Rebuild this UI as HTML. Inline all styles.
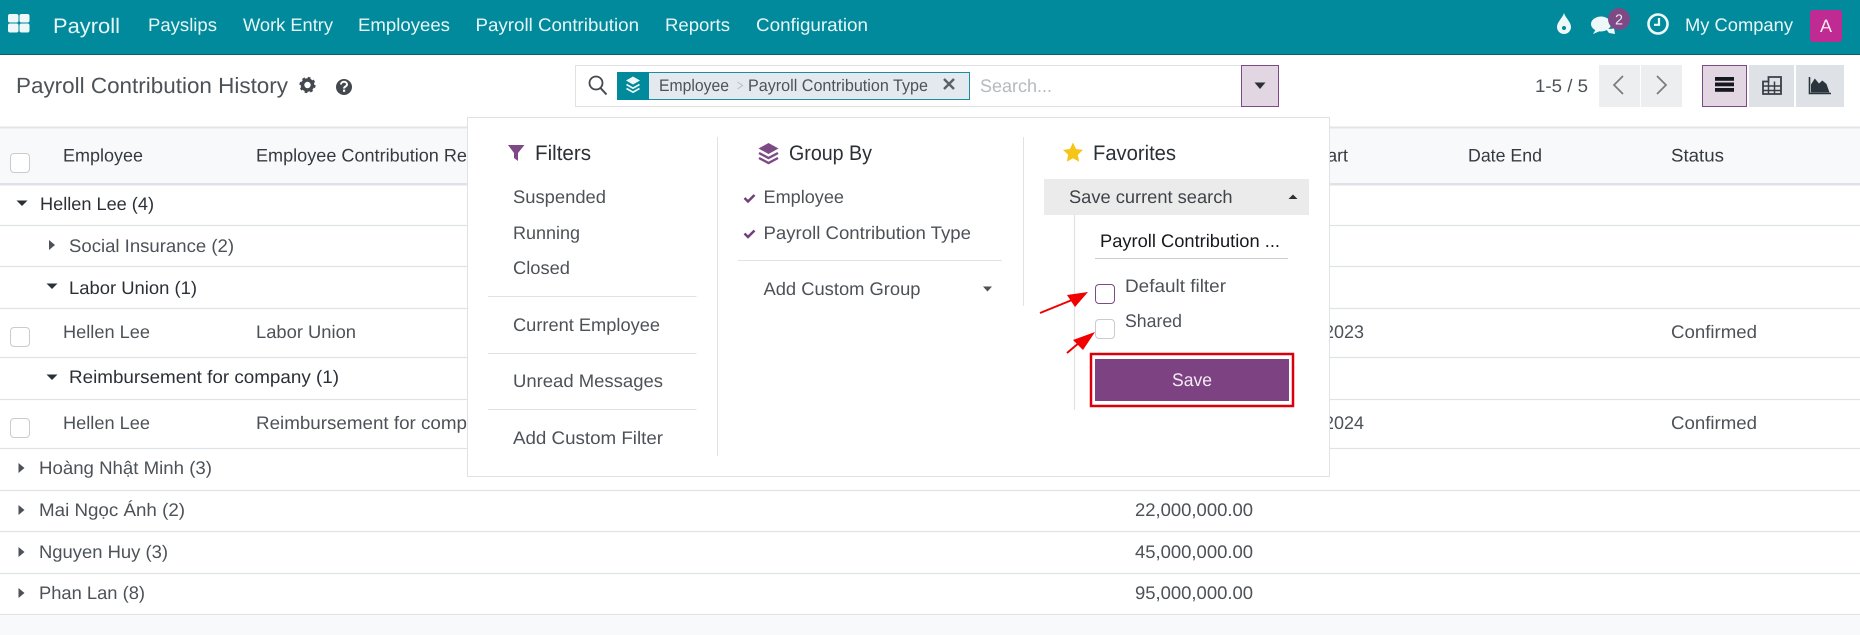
<!DOCTYPE html>
<html lang="en">
<head>
<meta charset="utf-8">
<title>Payroll Contribution History</title>
<style>
html,body{margin:0;padding:0;width:1860px;height:635px;overflow:hidden;background:#fff}
svg{display:block}
text{font-family:"Liberation Sans","Noto Sans CJK SC",sans-serif;font-size:18.2px;fill:#4d5258;text-rendering:geometricPrecision}
.n{fill:#e9f6f8}
.d{fill:#2b3036}
.h{fill:#353a40}
.t{font-size:21px;fill:#2b3036}
.l{stroke:#e0e3e6;stroke-width:1.2}
.cb{fill:#fff;stroke:#c9cbce;stroke-width:1}
.tri{fill:#2b3036}
.tr2{fill:#4d5258}
</style>
</head>
<body>
<svg width="1860" height="635" viewBox="0 0 1860 635" xmlns="http://www.w3.org/2000/svg">
<rect width="1860" height="635" fill="#fff"/>

<!-- navbar -->
<rect width="1860" height="54" fill="#018a9b"/>
<rect y="54" width="1860" height="1" fill="#05606b"/>
<g fill="#eef8f9">
<rect x="8" y="14" width="10.500" height="8.500" rx="2"/><rect x="19.500" y="14" width="10" height="8.500" rx="2"/>
<rect x="8" y="23.500" width="10.500" height="9" rx="2"/><rect x="19.500" y="23.500" width="10" height="9" rx="2"/>
</g>
<text class="n" x="53" y="33" style="font-size:21px" textLength="67" lengthAdjust="spacingAndGlyphs">Payroll</text>
<text class="n" x="148" y="31" textLength="69" lengthAdjust="spacingAndGlyphs">Payslips</text>
<text class="n" x="243" y="31" textLength="90" lengthAdjust="spacingAndGlyphs">Work Entry</text>
<text class="n" x="358" y="31" textLength="92" lengthAdjust="spacingAndGlyphs">Employees</text>
<text class="n" x="475.500" y="31" textLength="163.500" lengthAdjust="spacingAndGlyphs">Payroll Contribution</text>
<text class="n" x="665" y="31" textLength="65" lengthAdjust="spacingAndGlyphs">Reports</text>
<text class="n" x="756" y="31" textLength="112" lengthAdjust="spacingAndGlyphs">Configuration</text>

<!-- right nav -->
<path d="M1564 13c1.500 5 7 9 7 14a7 7 0 0 1-14 0c0-5 5.500-9 7-14z" fill="#eef8f9"/>
<circle cx="1564" cy="28" r="2" fill="#018a9b"/>
<ellipse cx="1601" cy="24" rx="10" ry="7.500" fill="#eef8f9"/>
<path d="M1596 29l-3 5 7-3z" fill="#eef8f9"/>
<path d="M1606 29q8 0 8-1l1 6-6-1z" fill="#eef8f9"/>
<circle cx="1619" cy="19" r="11" fill="#7d4a85"/>
<text x="1615" y="24.500" style="font-size:14.500px;fill:#f2e6f2" textLength="8" lengthAdjust="spacingAndGlyphs">2</text>
<circle cx="1658" cy="24" r="9.500" fill="none" stroke="#eef8f9" stroke-width="2.600"/>
<path d="M1659 18v6.800h-5" fill="none" stroke="#eef8f9" stroke-width="2.200"/>
<text class="n" x="1685" y="31" textLength="108" lengthAdjust="spacingAndGlyphs">My Company</text>
<rect x="1810" y="10" width="32" height="32" rx="3" fill="#c02b93"/>
<text x="1820" y="32" style="font-size:18px;fill:#f8e8f3" textLength="12" lengthAdjust="spacingAndGlyphs">A</text>

<!-- control panel -->
<text x="16" y="93" style="font-size:22px;fill:#4d5258" textLength="272" lengthAdjust="spacingAndGlyphs">Payroll Contribution History</text>
<circle cx="307.500" cy="85" r="5" fill="none" stroke="#44494f" stroke-width="3.600"/>
<circle cx="307.500" cy="85" r="7" fill="none" stroke="#44494f" stroke-width="2.200" stroke-dasharray="2.750 2.750"/>
<circle cx="344" cy="87" r="8" fill="#44494f"/>
<path d="M341 84.500c0-3.600 6-3.600 6 0 0 2-3 2-3 4" fill="none" stroke="#fff" stroke-width="2"/>
<rect x="343" y="89.600" width="2.200" height="2.200" fill="#fff"/>

<!-- search -->
<rect x="575.500" y="65.500" width="666" height="41" fill="#fff" stroke="#e0e2e5"/>
<circle cx="596" cy="83" r="6.500" fill="none" stroke="#44494f" stroke-width="1.800"/>
<path d="M600.500 88l6 6.500" stroke="#44494f" stroke-width="2"/>
<rect x="617.500" y="72.500" width="352" height="27" fill="#e3e9ef" stroke="#1a8e9c"/>
<rect x="617" y="72" width="32" height="28" fill="#018a9b"/>
<path d="M633 76.500l7 4-7 4-7-4z" fill="#eef8f9"/>
<path d="M626.500 84.500l6.500 3.700 6.500-3.700M626.500 88.500l6.500 3.700 6.500-3.700" fill="none" stroke="#eef8f9" stroke-width="1.700"/>
<text x="659" y="91" textLength="70" lengthAdjust="spacingAndGlyphs" style="font-size:16.800px">Employee</text>
<path d="M737.500 82l5 3.500-5 3.500" fill="none" stroke="#b9bdc2" stroke-width="1"/>
<text x="748" y="91" textLength="180" lengthAdjust="spacingAndGlyphs" style="font-size:16.800px">Payroll Contribution Type</text>
<path d="M944 79l10 10M954 79l-10 10" stroke="#5b6066" stroke-width="2.400"/>
<text x="980" y="92" textLength="72" lengthAdjust="spacingAndGlyphs" style="fill:#b6b9bd">Search...</text>
<rect x="1241.500" y="65.500" width="37" height="41" fill="#e2d6e3" stroke="#7d4a85"/>
<path d="M1254.500 82.500h11l-5.500 6.500z" fill="#2b3036"/>

<!-- pager -->
<text x="1535" y="92" textLength="53" lengthAdjust="spacingAndGlyphs">1-5 / 5</text>
<rect x="1599" y="65" width="41" height="42" fill="#eceef0"/>
<rect x="1641" y="65" width="41" height="42" fill="#eceef0"/>
<path d="M1623 76l-9 9 9 9" fill="none" stroke="#777b80" stroke-width="1.700"/>
<path d="M1657 76l9 9-9 9" fill="none" stroke="#777b80" stroke-width="1.700"/>
<rect x="1702.500" y="65.500" width="44" height="41" fill="#e2d6e3" stroke="#7d4a85"/>
<rect x="1749" y="65" width="45" height="42" fill="#dee2e6"/>
<rect x="1796" y="65" width="48" height="42" fill="#dee2e6"/>
<g fill="#15181c">
<rect x="1715" y="77" width="19" height="3.800"/><rect x="1715" y="82.500" width="19" height="3.800"/><rect x="1715" y="88" width="19" height="3.800"/>
</g>
<path d="M1763.500 86h17M1763.500 90.500h17M1768.500 81.500v12.500M1774.500 81.500v12.500" stroke="#3a3f45" stroke-width="1.500" fill="none"/>
<path d="M1763 81.500h5.500v-4.500h12.500v17h-18z" fill="none" stroke="#3a3f45" stroke-width="1.800"/>
<path d="M1809.500 77v16.500h21.500" fill="none" stroke="#2a343d" stroke-width="1.600"/>
<path d="M1811 92.500v-8l3.800-6 4.200 5 3.300-3 4.200 3.500 3 8.500z" fill="#2a343d"/>

<!-- table header -->
<rect y="127" width="1860" height="57" fill="#f8f9fa"/>
<rect y="126.500" width="1860" height="2" fill="#e2e5e8"/>
<rect y="183" width="1860" height="2.500" fill="#dfe2e6"/>
<rect class="cb" x="10.500" y="153.500" width="19" height="19" rx="3.500"/>
<text class="h" x="63" y="161.500" textLength="80" lengthAdjust="spacingAndGlyphs">Employee</text>
<text class="h" x="256" y="161.500" textLength="211" lengthAdjust="spacingAndGlyphs">Employee Contribution Re</text>
<text class="h" x="1268" y="161.500" textLength="80" lengthAdjust="spacingAndGlyphs">Date Start</text>
<text class="h" x="1468" y="161.500" textLength="74" lengthAdjust="spacingAndGlyphs">Date End</text>
<text class="h" x="1671" y="161.500" textLength="53" lengthAdjust="spacingAndGlyphs">Status</text>

<!-- rows -->
<path class="l" d="M0 225.500h1860M0 266.500h1860M0 308.500h1860M0 357.500h1860M0 399.500h1860M0 448.500h1860M0 490.500h1860M0 531.500h1860M0 573.500h1860M0 614.500h1860"/>
<rect y="615" width="1860" height="20" fill="#f8f9fa"/>

<path class="tri" d="M16.500 200.500h11l-5.500 5.500z"/>
<text class="d" x="40" y="210" textLength="114" lengthAdjust="spacingAndGlyphs">Hellen Lee (4)</text>
<path class="tr2" d="M49 240l6 5-6 5z"/>
<text x="69" y="252" textLength="165" lengthAdjust="spacingAndGlyphs">Social Insurance (2)</text>
<path class="tri" d="M46.500 283.500h11l-5.500 5.500z"/>
<text class="d" x="69" y="294" textLength="128" lengthAdjust="spacingAndGlyphs">Labor Union (1)</text>

<rect class="cb" x="10.500" y="327.500" width="19" height="19" rx="3.500"/>
<text x="63" y="338" textLength="87" lengthAdjust="spacingAndGlyphs">Hellen Lee</text>
<text x="256" y="338" textLength="100" lengthAdjust="spacingAndGlyphs">Labor Union</text>
<text x="1324" y="338" textLength="40" lengthAdjust="spacingAndGlyphs">2023</text>
<text x="1671" y="338" textLength="86" lengthAdjust="spacingAndGlyphs">Confirmed</text>

<path class="tri" d="M46.500 374.500h11l-5.500 5.500z"/>
<text class="d" x="69" y="383" textLength="270" lengthAdjust="spacingAndGlyphs">Reimbursement for company (1)</text>

<rect class="cb" x="10.500" y="418.500" width="19" height="19" rx="3.500"/>
<text x="63" y="429" textLength="87" lengthAdjust="spacingAndGlyphs">Hellen Lee</text>
<text x="256" y="429" textLength="211" lengthAdjust="spacingAndGlyphs">Reimbursement for comp</text>
<text x="1324" y="429" textLength="40" lengthAdjust="spacingAndGlyphs">2024</text>
<text x="1671" y="429" textLength="86" lengthAdjust="spacingAndGlyphs">Confirmed</text>

<path class="tr2" d="M18.500 463l6 5-6 5z"/>
<text x="39" y="474" textLength="173" lengthAdjust="spacingAndGlyphs">Hoàng Nhật Minh (3)</text>
<text x="1135" y="474" textLength="118" lengthAdjust="spacingAndGlyphs">33,000,000.00</text>
<path class="tr2" d="M18.500 505l6 5-6 5z"/>
<text x="39" y="516" textLength="146" lengthAdjust="spacingAndGlyphs">Mai Ngọc Ánh (2)</text>
<text x="1135" y="516" textLength="118" lengthAdjust="spacingAndGlyphs">22,000,000.00</text>
<path class="tr2" d="M18.500 547l6 5-6 5z"/>
<text x="39" y="558" textLength="129" lengthAdjust="spacingAndGlyphs">Nguyen Huy (3)</text>
<text x="1135" y="558" textLength="118" lengthAdjust="spacingAndGlyphs">45,000,000.00</text>
<path class="tr2" d="M18.500 588l6 5-6 5z"/>
<text x="39" y="599" textLength="106" lengthAdjust="spacingAndGlyphs">Phan Lan (8)</text>
<text x="1135" y="599" textLength="118" lengthAdjust="spacingAndGlyphs">95,000,000.00</text>

<!-- dropdown -->
<rect x="467.500" y="117.500" width="862" height="359" fill="#fff" stroke="#e0e2e5"/>
<path class="l" d="M717.500 137v319M1023.500 137v169" style="stroke-width:1"/>

<!-- filters -->
<path d="M508 145h16.500l-6.500 8v8l-4-3v-5z" fill="#7d4a85"/>
<text class="t" x="535" y="160" textLength="56" lengthAdjust="spacingAndGlyphs">Filters</text>
<text x="513" y="203" textLength="93" lengthAdjust="spacingAndGlyphs">Suspended</text>
<text x="513" y="239" textLength="67" lengthAdjust="spacingAndGlyphs">Running</text>
<text x="513" y="274" textLength="57" lengthAdjust="spacingAndGlyphs">Closed</text>
<path class="l" d="M488 296.500h208.500M488 353.500h208.500M488 409.500h208.500" style="stroke-width:1"/>
<text x="513" y="331" textLength="147" lengthAdjust="spacingAndGlyphs">Current Employee</text>
<text x="513" y="387" textLength="150" lengthAdjust="spacingAndGlyphs">Unread Messages</text>
<text x="513" y="444" textLength="150" lengthAdjust="spacingAndGlyphs">Add Custom Filter</text>

<!-- group by -->
<path d="M768.500 143l10 5.500-10 5.500-10-5.500z" fill="#7d4a85"/>
<path d="M759 153l9.500 5 9.500-5M759 158l9.500 5 9.500-5" fill="none" stroke="#7d4a85" stroke-width="2.400"/>
<text class="t" x="789" y="160" textLength="83" lengthAdjust="spacingAndGlyphs">Group By</text>
<path d="M744.500 198l3.500 3.500 6.500-6.500" fill="none" stroke="#70407a" stroke-width="2.500"/>
<path d="M744.500 233.500l3.500 3.500 6.500-6.500" fill="none" stroke="#70407a" stroke-width="2.500"/>
<text x="763.500" y="203" textLength="80.500" lengthAdjust="spacingAndGlyphs">Employee</text>
<text x="763.500" y="239" textLength="207.500" lengthAdjust="spacingAndGlyphs">Payroll Contribution Type</text>
<path class="l" d="M738 260.500h264" style="stroke-width:1"/>
<text x="763.500" y="295" textLength="157" lengthAdjust="spacingAndGlyphs">Add Custom Group</text>
<path d="M983 286.500h9l-4.500 5z" fill="#4d5258"/>

<!-- favorites -->
<path d="M1073 142.500l3 6.500 7 .9-5.200 4.800 1.400 7-6.200-3.500-6.200 3.500 1.400-7-5.200-4.800 7-.9z" fill="#f5c518"/>
<text class="t" x="1093" y="160" textLength="83" lengthAdjust="spacingAndGlyphs">Favorites</text>
<rect x="1044" y="179" width="265" height="36" fill="#ebebeb"/>
<text x="1069" y="203" textLength="163.500" lengthAdjust="spacingAndGlyphs" style="fill:#3e4349">Save current search</text>
<path d="M1288.500 199h9l-4.500-4.500z" fill="#2b3036"/>
<path class="l" d="M1074.500 215v195" style="stroke-width:1.200"/>
<text x="1100" y="247" textLength="180" lengthAdjust="spacingAndGlyphs" style="fill:#15181c">Payroll Contribution ...</text>
<path d="M1095 258.500h193" stroke="#c9ccd0" stroke-width="1"/>
<rect x="1095.500" y="284.500" width="19" height="19" rx="3.500" fill="#fff" stroke="#7d4a85"/>
<text x="1125" y="292" textLength="101" lengthAdjust="spacingAndGlyphs">Default filter</text>
<rect class="cb" x="1095.500" y="319.500" width="19" height="19" rx="3.500"/>
<text x="1125" y="327" textLength="57" lengthAdjust="spacingAndGlyphs">Shared</text>
<rect x="1091" y="354" width="202" height="52" fill="#fff" stroke="#d8000c" stroke-width="2.500"/>
<rect x="1095" y="359" width="194" height="42" fill="#7d4282"/>
<text x="1172" y="386" textLength="40" lengthAdjust="spacingAndGlyphs" style="fill:#f3ebf4">Save</text>

<!-- arrows -->
<path d="M1040 313l32-13" stroke="#f00000" stroke-width="2" fill="none"/>
<path d="M1088 292l-21 3 8 12z" fill="#f00000"/>
<path d="M1067 353l13-11" stroke="#f00000" stroke-width="2" fill="none"/>
<path d="M1095 332l-22 8 10 10z" fill="#f00000"/>
</svg>
</body>
</html>
